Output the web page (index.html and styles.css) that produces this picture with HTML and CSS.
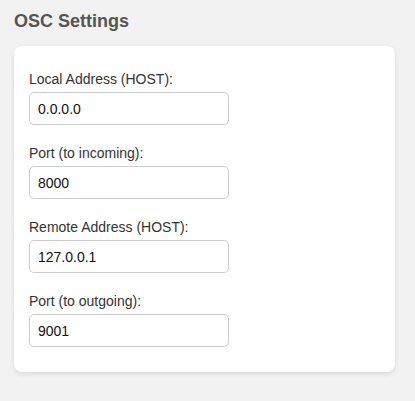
FILE: index.html
```html
<!DOCTYPE html>
<html lang="en">
<head>
    <meta charset="UTF-8">
    <meta name="viewport" content="width=device-width, initial-scale=1.0">
    <title>OSC Settings</title>
    <link rel="stylesheet" href="styles.css">
</head>
<body>
    <div class="page">
        <h2>OSC Settings</h2>
        <div class="card">
            <div class="form-group">
                <label for="local-host">Local Address (HOST):</label>
                <input type="text" id="local-host" value="0.0.0.0">
            </div>
            <div class="form-group">
                <label for="local-port">Port (to incoming):</label>
                <input type="text" id="local-port" value="8000">
            </div>
            <div class="form-group">
                <label for="remote-host">Remote Address (HOST):</label>
                <input type="text" id="remote-host" value="127.0.0.1">
            </div>
            <div class="form-group">
                <label for="remote-port">Port (to outgoing):</label>
                <input type="text" id="remote-port" value="9001">
            </div>
        </div>
    </div>
</body>
</html>
```

FILE: styles.css
```css
body {
    font-family: "Liberation Sans", Arial, sans-serif;
    margin: 0;
    background-color: #f2f2f2;
}
.page {
    padding: 11px 20px 20px 14px;
}
h2 {
    margin: 0 0 14px;
    font-size: 18px;
    font-weight: bold;
    color: #555;
}
.card {
    background: white;
    border-radius: 8px;
    padding: 5px 15px;
    box-shadow: 0 2px 5px rgba(0, 0, 0, 0.1);
}
.form-group {
    margin: 20px 0;
}
.form-group label {
    display: block;
    font-size: 14px;
    color: #333;
    margin-bottom: 5px;
}
.form-group input {
    display: block;
    width: 200px;
    height: 33px;
    box-sizing: border-box;
    padding: 0 8px;
    font-family: "Liberation Sans", Arial, sans-serif;
    font-size: 14px;
    color: #111;
    border: 1px solid #ccc;
    border-radius: 5px;
    background: white;
}
```
